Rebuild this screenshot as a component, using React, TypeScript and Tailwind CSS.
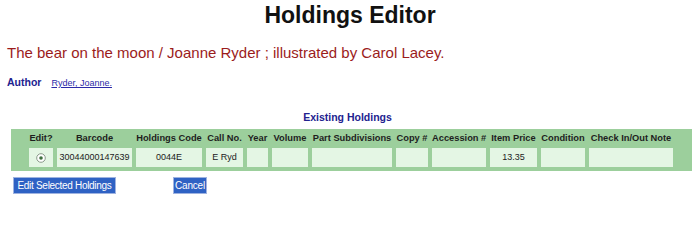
const cols = [
  { label: '', w: 'w-[10px]' },
  { label: 'Edit?', w: 'w-[24px]' },
  { label: 'Barcode', w: 'w-[75px]' },
  { label: 'Holdings Code', w: 'w-[66px]' },
  { label: 'Call No.', w: 'w-[37px]' },
  { label: 'Year', w: 'w-[21px]' },
  { label: 'Volume', w: 'w-[36px]' },
  { label: 'Part Subdivisions', w: 'w-[80px]' },
  { label: 'Copy #', w: 'w-[32px]' },
  { label: 'Accession #', w: 'w-[54px]' },
  { label: 'Item Price', w: 'w-[47px]' },
  { label: 'Condition', w: 'w-[44px]' },
  { label: 'Check In/Out Note', w: 'w-[84px]' },
  { label: '', w: 'w-[11px]' },
];

const row = ['30044000147639', '0044E', 'E Ryd', '', '', '', '', '', '13.35', '', ''];

function Radio() {
  return (
    <svg width="10" height="10" viewBox="0 0 10 10" className="mx-auto block">
      <circle cx="5" cy="5" r="4.3" fill="#fff" stroke="#8a9a8a" strokeWidth="1" />
      <circle cx="5" cy="5" r="1.8" fill="#3f6f3f" />
    </svg>
  );
}

export default function App() {
  return (
    <div className="min-h-[201px] w-[700px] bg-white font-['Liberation_Sans',Arial,sans-serif]">
      <h1 className="pt-[2px] text-center text-[23px] font-bold leading-[26px] text-[#111]">
        Holdings Editor
      </h1>

      <p className="mt-[16px] pl-[7px] text-[15px] leading-[18px] text-[#9b1c1c]">
        The bear on the moon / Joanne Ryder ; illustrated by Carol Lacey.
      </p>

      <div className="mt-[14px] flex items-baseline pl-[7px] leading-[13px]">
        <span className="text-[10.5px] font-bold text-[#22228f]">Author</span>
        <a href="#" className="ml-[10px] text-[9px] text-[#2a2aa8] underline">
          Ryder, Joanne.
        </a>
      </div>

      <h2 className="mt-[21px] pr-[5px] text-center text-[10.5px] font-bold leading-[13px] text-[#22228f]">
        Existing Holdings
      </h2>

      <table className="ml-[11px] mt-[5px] w-[681px] table-fixed border-separate border-spacing-[4px] bg-[#9ccf9c]">
        <thead>
          <tr className="h-[11px]">
            {cols.map((c, i) => (
              <th
                key={i}
                className={`${c.w} p-0 text-center text-[9.3px] font-bold leading-[11px] whitespace-nowrap text-[#1e1e1e]`}
              >
                {c.label}
              </th>
            ))}
          </tr>
        </thead>
        <tbody>
          <tr className="h-[19px]">
            <td className="p-0" />
            <td className="bg-[#e4f6e4] p-0 align-middle">
              <Radio />
            </td>
            {row.map((v, i) => (
              <td
                key={i}
                className="bg-[#e4f6e4] p-0 text-center align-middle text-[9px] leading-[19px] text-[#222]"
              >
                {v}
              </td>
            ))}
            <td className="p-0" />
          </tr>
        </tbody>
      </table>

      <div className="mt-[6px] flex items-center pl-[13px]">
        <button className="h-[17px] w-[103px] border border-[#9fb3e0] bg-[#2f62c4] px-[2px] text-[10px] leading-[15px] tracking-[-0.3px] text-white">
          Edit Selected Holdings
        </button>
        <button className="ml-[57px] h-[17px] w-[34px] border border-[#9fb3e0] bg-[#2f62c4] px-[1px] text-[10px] leading-[15px] tracking-[-0.2px] text-white">
          Cancel
        </button>
      </div>
    </div>
  );
}
